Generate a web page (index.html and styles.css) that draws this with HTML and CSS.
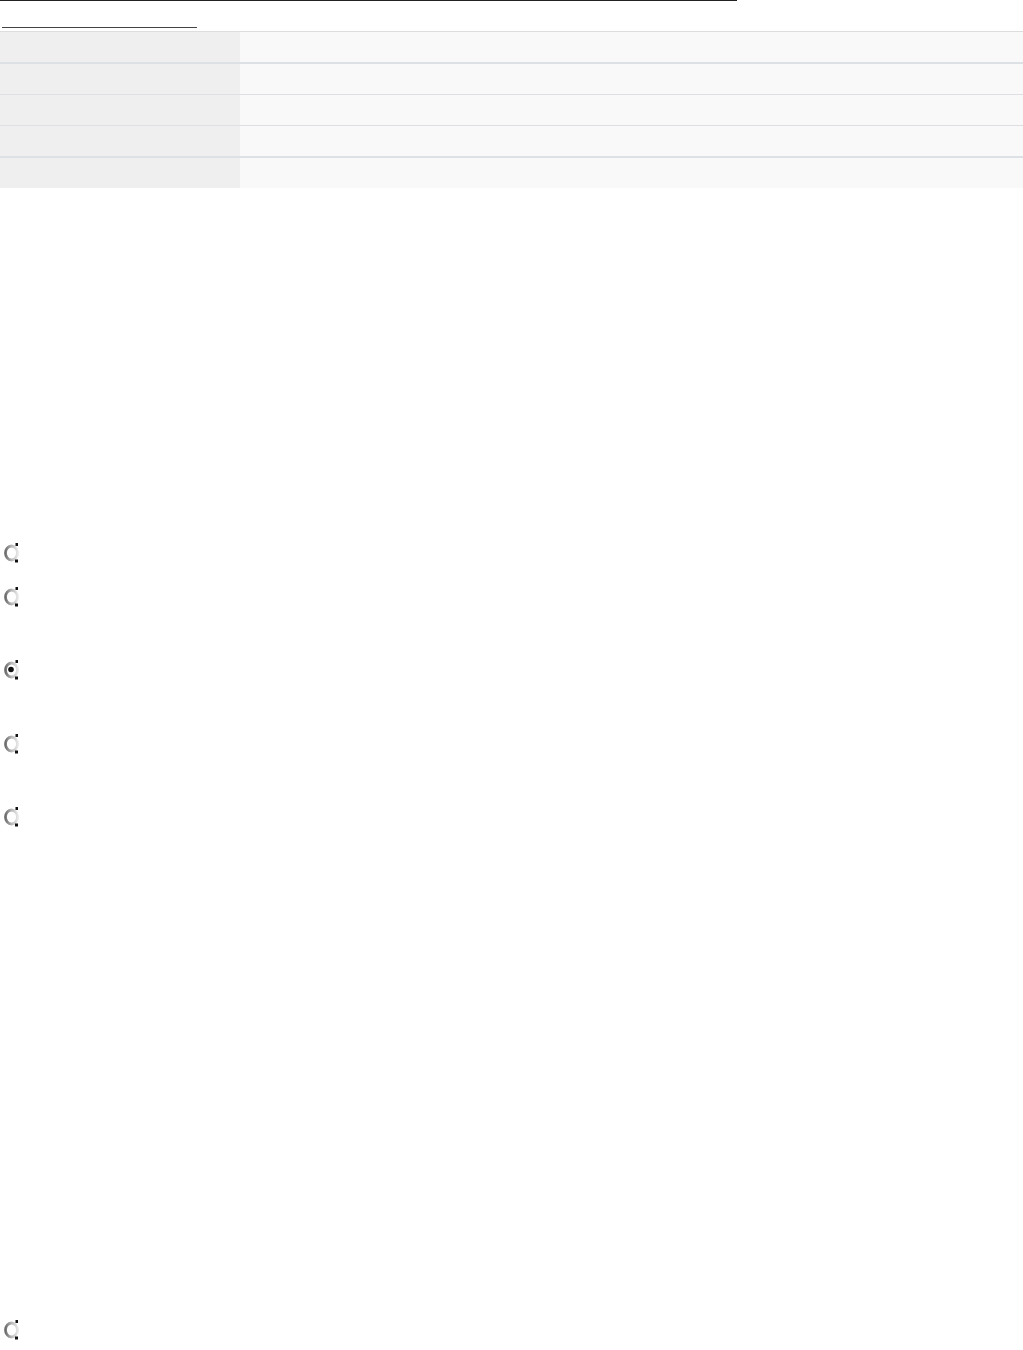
FILE: index.html
```html
<!DOCTYPE html>
<html>
<head>
<meta charset="utf-8">
<link rel="stylesheet" href="styles.css">
</head>
<body>
<div class="page">
  <div class="rule-top"></div>
  <div class="rule-sub"></div>
  <div class="table">
    <div class="row sep-strong"><div class="cell-key"></div><div class="cell-val"></div></div>
    <div class="row sep-thin"><div class="cell-key"></div><div class="cell-val"></div></div>
    <div class="row sep-thin"><div class="cell-key"></div><div class="cell-val"></div></div>
    <div class="row sep-strong"><div class="cell-key"></div><div class="cell-val"></div></div>
    <div class="row"><div class="cell-key"></div><div class="cell-val"></div></div>
  </div>
  <div class="options">
    <div class="opt opt-1"><svg class="radio" viewBox="0 0 18 22" width="18" height="22"><defs><linearGradient id="g1" x1="0" x2="1" y1="0" y2="0"><stop offset="0" stop-color="#6e6e6e"/><stop offset="0.5" stop-color="#b8b8b8"/><stop offset="1" stop-color="#e6e6e6"/></linearGradient></defs><ellipse cx="8.5" cy="11" rx="6" ry="7" fill="#fff" stroke="url(#g1)" stroke-width="2.8"/><rect x="12.5" y="1" width="2.5" height="3" fill="#111"/><rect x="12" y="17.5" width="3" height="3" fill="#111"/></svg></div>
    <div class="opt opt-2"><svg class="radio" viewBox="0 0 18 22" width="18" height="22"><ellipse cx="8.5" cy="11" rx="6" ry="7" fill="#fff" stroke="url(#g1)" stroke-width="2.8"/><rect x="12.5" y="1" width="2.5" height="3" fill="#111"/><rect x="12" y="17.5" width="3" height="3" fill="#111"/></svg></div>
    <div class="opt opt-3"><svg class="radio" viewBox="0 0 18 22" width="18" height="22"><ellipse cx="8.5" cy="11" rx="6" ry="7" fill="#fff" stroke="url(#g1)" stroke-width="2.8"/><circle cx="8" cy="10.5" r="2.8" fill="#111"/><rect x="12.5" y="1" width="2.5" height="3" fill="#111"/><rect x="12" y="17.5" width="3" height="3" fill="#111"/></svg></div>
    <div class="opt opt-4"><svg class="radio" viewBox="0 0 18 22" width="18" height="22"><ellipse cx="8.5" cy="11" rx="6" ry="7" fill="#fff" stroke="url(#g1)" stroke-width="2.8"/><rect x="12.5" y="1" width="2.5" height="3" fill="#111"/><rect x="12" y="17.5" width="3" height="3" fill="#111"/></svg></div>
    <div class="opt opt-5"><svg class="radio" viewBox="0 0 18 22" width="18" height="22"><ellipse cx="8.5" cy="11" rx="6" ry="7" fill="#fff" stroke="url(#g1)" stroke-width="2.8"/><rect x="12.5" y="1" width="2.5" height="3" fill="#111"/><rect x="12" y="17.5" width="3" height="3" fill="#111"/></svg></div>
    <div class="opt opt-6"><svg class="radio" viewBox="0 0 18 22" width="18" height="22"><ellipse cx="8.5" cy="11" rx="6" ry="7" fill="#fff" stroke="url(#g1)" stroke-width="2.8"/><rect x="12.5" y="1" width="2.5" height="3" fill="#111"/><rect x="12" y="17.5" width="3" height="3" fill="#111"/></svg></div>
  </div>
</div>
</body>
</html>
```
FILE: styles.css
```css
html, body {
  margin: 0;
  padding: 0;
  background: #fff;
  font-family: "Liberation Sans", Arial, sans-serif;
}
.page {
  width: 1023px;
}
.rule-top {
  width: 737px;
  height: 0;
  border-top: 1px solid #222;
}
.rule-sub {
  width: 195px;
  margin-left: 2px;
  margin-top: 26px;
  height: 0;
  border-top: 1px solid #444;
}
.table {
  margin-top: 3px;
  border-top: 1px solid #dddddd;
  display: flex;
  flex-direction: column;
}
.row {
  display: grid;
  grid-template-columns: 240px 1fr;
  height: 30px;
}
.row.sep-strong {
  border-bottom: 2px solid #dde1e6;
}
.row.sep-thin {
  border-bottom: 1px solid #e0dee3;
}
.cell-key {
  background: #efefef;
}
.cell-val {
  background: #f9f9f9;
}
.options {
  display: flex;
  flex-direction: column;
}
.opt {
  height: 22px;
  padding-left: 3px;
}
.radio {
  display: block;
}
.opt-1 { margin-top: 354px; }
.opt-2 { margin-top: 22px; }
.opt-3 { margin-top: 51px; }
.opt-4 { margin-top: 52px; }
.opt-5 { margin-top: 51px; }
.opt-6 { margin-top: 491px; }
```
